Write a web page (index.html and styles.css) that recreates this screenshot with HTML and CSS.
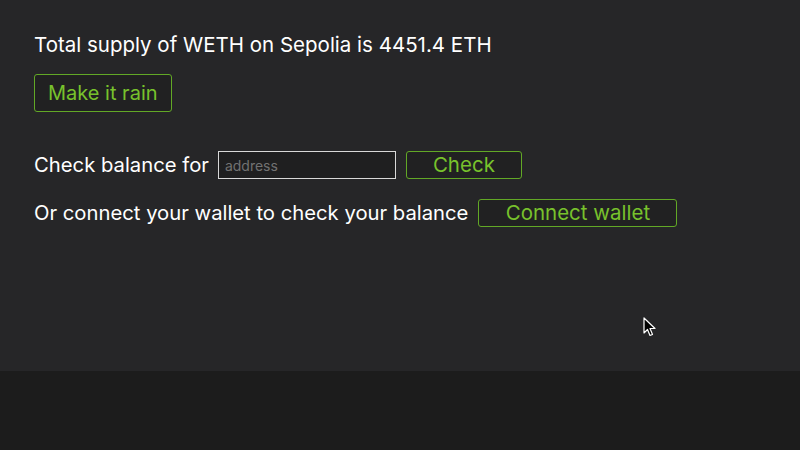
FILE: index.html
```html
<!DOCTYPE html>
<html>
<head>
<meta charset="utf-8">
<link rel="stylesheet" href="styles.css">
</head>
<body>
<main class="app">
  <p class="supply">Total supply of WETH on Sepolia is 4451.4 ETH</p>
  <div class="rain-row"><button class="btn btn-rain">Make it rain</button></div>
  <div class="row check-row">
    <span class="label">Check balance for</span>
    <input class="addr" type="text" placeholder="address">
    <button class="btn btn-small btn-check">Check</button>
  </div>
  <div class="row connect-row">
    <span class="label">Or connect your wallet to check your balance</span>
    <button class="btn btn-small btn-connect">Connect wallet</button>
  </div>
</main>
<footer class="bottom"></footer>
<svg class="cursor" width="14" height="22" viewBox="0 0 14 22"><path d="M1 1 L1 16 L4.5 12.5 L7 18.5 L9.5 17.5 L7 11.5 L12 11.5 Z" fill="#000" stroke="#fff" stroke-width="1.2" stroke-linejoin="round"/></svg>
</body>
</html>
```
FILE: styles.css
```css
html, body {
  margin: 0;
  padding: 0;
}
body {
  width: 800px;
  height: 450px;
  background: #262628;
  color: #ffffff;
  font-family: Inter, "Helvetica Neue", "Liberation Sans", sans-serif;
  display: flex;
  flex-direction: column;
  overflow: hidden;
  position: relative;
}
.app {
  height: 371px;
  box-sizing: border-box;
  padding: 31px 34px 0;
  display: flex;
  flex-direction: column;
}
.supply {
  margin: 0;
  font-size: 20.5px;
  line-height: 28px;
}
.rain-row {
  margin-top: 15px;
  display: flex;
}
.btn {
  font-family: inherit;
  background: #212122;
  color: #78c22c;
  border: 1px solid #62a826;
  border-radius: 3px;
  font-size: 20px;
  cursor: pointer;
  box-sizing: border-box;
}
.btn-rain {
  height: 38px;
  padding: 0 13px;
}
.row {
  display: flex;
  align-items: center;
}
.label {
  font-size: 20.25px;
  line-height: 28px;
}
.check-row {
  margin-top: 39px;
}
.connect-row {
  margin-top: 20px;
}
.addr {
  width: 178px;
  height: 28px;
  box-sizing: border-box;
  margin-left: 9px;
  background: #1f1f20;
  border: 1px solid #d8d8d8;
  border-radius: 0;
  color: #fff;
  font-family: inherit;
  font-size: 14px;
  padding: 0 6px;
  outline: none;
}
.addr::placeholder {
  color: #727272;
}
.btn-small {
  height: 28px;
  padding: 0;
  line-height: 26px;
  font-size: 20.5px;
}
.btn-check {
  width: 116px;
  margin-left: 10px;
}
.btn-connect {
  width: 199px;
  margin-left: 10px;
}
.bottom {
  flex: 1;
  background: #1c1c1c;
}
.cursor {
  position: absolute;
  left: 643px;
  top: 317px;
}
```
